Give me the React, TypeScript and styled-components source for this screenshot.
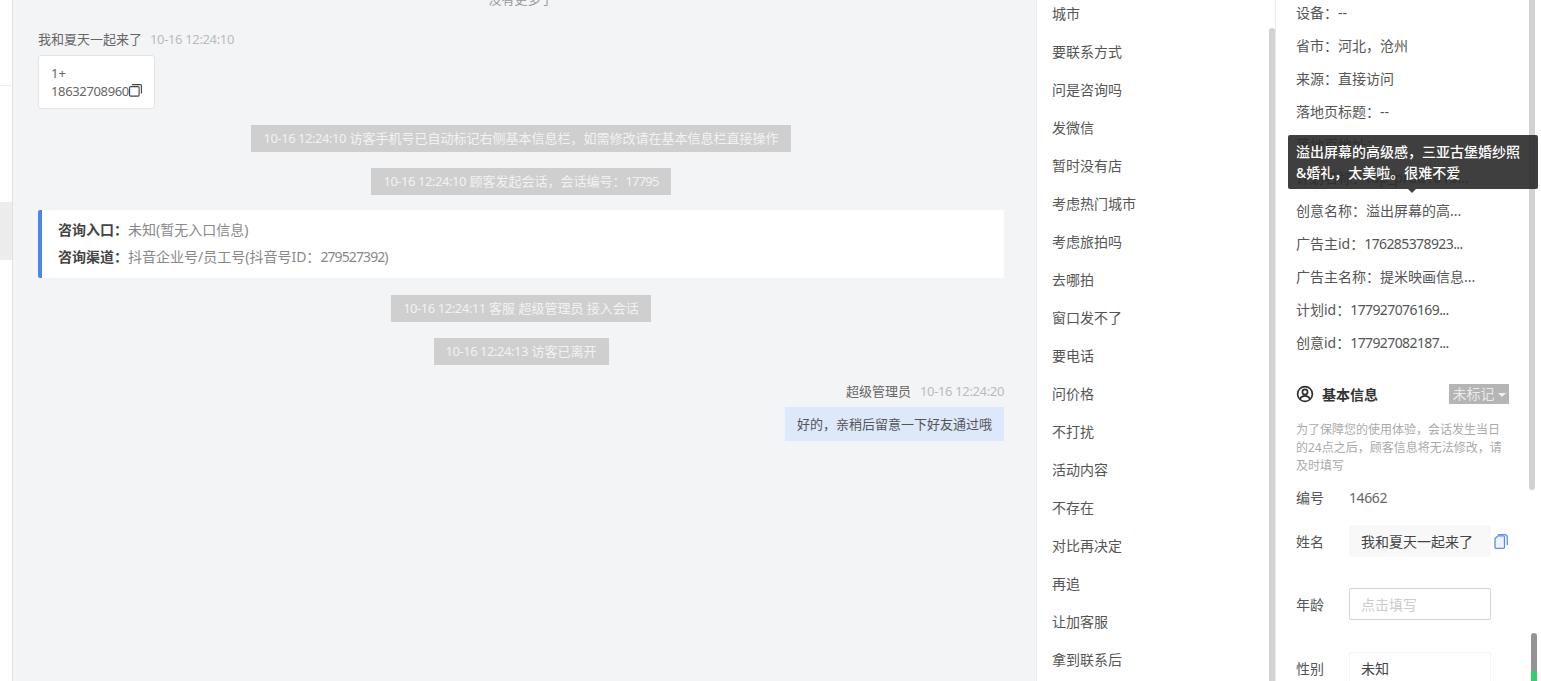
import * as React from "react";
import styled, { createGlobalStyle } from "styled-components";

const GlobalStyle = createGlobalStyle`
  html, body {
    margin: 0;
    padding: 0;
    height: 100%;
    overflow: hidden;
    background: #fff;
  }
  body {
    font-family: "Noto Sans", "Noto Sans CJK SC", sans-serif;
    font-size: 14px;
    color: #555;
  }
`;

const Page = styled.div`
  display: flex;
  position: relative;
  width: 1541px;
  height: 681px;
  overflow: hidden;
`;

const Rail = styled.div`
  width: 12px;
  flex: none;
  border-right: 1px solid #e2e2e2;
  background: #fff;
`;

const RailLine = styled.div`
  height: 1px;
  margin-top: 85px;
  background: #efefef;
`;

const RailActive = styled.div`
  height: 58px;
  margin-top: 116px;
  background: #ececec;
`;

const Main = styled.div`
  width: 1023px;
  flex: none;
  box-sizing: border-box;
  padding: 0 32px 0 25px;
  background: #f3f4f6;
  display: flex;
  flex-direction: column;
`;

const NoMore = styled.div`
  margin-top: -11px;
  height: 20px;
  line-height: 20px;
  font-size: 13px;
  color: #999;
  text-align: center;
`;

const MetaRow = styled.div<{ $right?: boolean; $top: number }>`
  display: flex;
  align-items: center;
  gap: ${(p) => (p.$right ? 9 : 8)}px;
  height: 20px;
  line-height: 20px;
  margin-top: ${(p) => p.$top}px;
  font-size: 13px;
  color: #666;
  justify-content: ${(p) => (p.$right ? "flex-end" : "flex-start")};
`;

const Time = styled.span`
  color: #bbb;
  letter-spacing: -0.35px;
`;

const Digits = styled.span<{ $tight: number }>`
  letter-spacing: ${(p) => p.$tight}px;
`;

const PhoneCard = styled.div`
  width: 117px;
  height: 54px;
  box-sizing: border-box;
  margin-top: 6px;
  padding: 8px 12px;
  background: #fff;
  border: 1px solid #e3e4e6;
  border-radius: 3px;
  font-size: 13px;
  line-height: 18px;
  color: #666;
`;

const PhoneLine = styled.div`
  display: flex;
  align-items: center;
  white-space: nowrap;
  svg {
    flex: none;
    margin-top: -2px;
  }
`;

const SystemNote = styled.div<{ $gap: number }>`
  align-self: center;
  height: 27px;
  line-height: 27px;
  padding: 0 12px;
  margin-top: ${(p) => p.$gap}px;
  background: #cfcfcf;
  color: #f2f2f2;
  font-size: 13px;
  white-space: nowrap;
`;

const EntryCard = styled.div`
  margin-top: 15px;
  height: 68px;
  box-sizing: border-box;
  padding: 6px 16px;
  background: #fff;
  border-left: 4px solid #4a86f0;
  border-radius: 2px;
  font-size: 14px;
  line-height: 27px;
  color: #888;
`;

const EntryLabel = styled.b`
  font-weight: 700;
  color: #444;
`;

const Bubble = styled.div`
  align-self: flex-end;
  margin-top: 6px;
  height: 34px;
  line-height: 34px;
  padding: 0 12px;
  background: #dde8fb;
  color: #555;
  font-size: 13px;
  white-space: nowrap;
`;

const PhrasePanel = styled.div`
  width: 240px;
  flex: none;
  box-sizing: border-box;
  display: flex;
  background: #fff;
  border-left: 1px solid #e8eaee;
  border-right: 1px solid #e8eaee;
`;

const PhraseList = styled.div`
  flex: 1;
  margin-top: -5px;
  padding-left: 15px;
`;

const PhraseItem = styled.div`
  height: 38px;
  line-height: 38px;
  font-size: 14px;
  color: #555;
`;

const PhraseThumb = styled.div`
  width: 6px;
  flex: none;
  margin-top: 28px;
  background: #d2d2d2;
  border-radius: 3px 3px 0 0;
`;

const InfoPanel = styled.div`
  width: 253px;
  flex: none;
  box-sizing: border-box;
  padding-left: 20px;
  background: #fff;
  color: #555;
`;

const InfoRows = styled.div`
  margin-top: -4px;
`;

const InfoRow = styled.div`
  height: 33px;
  line-height: 33px;
  white-space: nowrap;
`;

const SectionHead = styled.div`
  display: flex;
  align-items: center;
  margin-top: 23px;
  padding-right: 20px;
  height: 24px;
`;

const SectionTitle = styled.div`
  margin-left: 8px;
  font-weight: 700;
  color: #333;
  flex: 1;
`;

const MarkTag = styled.div`
  width: 60px;
  height: 20px;
  line-height: 20px;
  text-align: center;
  background: #b5b5b5;
  color: #eaeaea;
  white-space: nowrap;
`;

const Caret = styled.span`
  display: inline-block;
  margin-left: 3px;
  vertical-align: middle;
  border: 4px solid transparent;
  border-top: 4px solid #f0f0f0;
  border-bottom: 0;
`;

const Notice = styled.div`
  margin-top: 15px;
  width: 210px;
  font-size: 12px;
  line-height: 18px;
  color: #aaa;
`;

const FieldRow = styled.div<{ $top: number }>`
  display: flex;
  align-items: center;
  margin-top: ${(p) => p.$top}px;
  color: #555;
`;

const FieldLabel = styled.div`
  width: 53px;
  flex: none;
`;

const FieldValue = styled.div<{ $tone: "filled" | "input" | "faint" }>`
  width: 142px;
  height: 32px;
  line-height: 32px;
  box-sizing: border-box;
  padding-left: 11px;
  border-radius: 2px;
  white-space: nowrap;
  background: ${(p) => (p.$tone === "filled" ? "#f8f8f8" : "#fff")};
  border: 1px solid
    ${(p) =>
      p.$tone === "input"
        ? "#d4d4d4"
        : p.$tone === "faint"
          ? "#f3f3f3"
          : "#f8f8f8"};
  color: ${(p) => (p.$tone === "input" ? "#ccc" : "#444")};
`;

const PlainValue = styled.div`
  color: #666;
  letter-spacing: -0.4px;
`;

const CopyButton = styled.div`
  margin-left: 3px;
  display: flex;
`;

const InfoThumb = styled.div`
  width: 6px;
  height: 490px;
  flex: none;
  background: #d2d2d2;
  border-radius: 0 0 3px 3px;
`;

const PageThumb = styled.div`
  position: absolute;
  left: 1531px;
  top: 633px;
  bottom: 0;
  width: 6px;
  background: #949494;
  border-radius: 3px 3px 0 0;
  overflow: hidden;
`;

const PageThumbGreen = styled.div`
  position: absolute;
  left: 0;
  right: 0;
  bottom: 0;
  height: 10px;
  background: #35cf72;
`;

const Tooltip = styled.div`
  position: absolute;
  left: 1288px;
  top: 135px;
  width: 250px;
  height: 54px;
  box-sizing: border-box;
  padding: 6px 12px 6px 8px;
  border-radius: 2px;
  background: rgba(42, 42, 42, 0.9);
  color: #fff;
  font-size: 14px;
  font-weight: 500;
  line-height: 21px;
  &::after {
    content: "";
    position: absolute;
    left: 120px;
    top: 100%;
    border: 4px solid transparent;
    border-top-color: rgba(42, 42, 42, 0.9);
    border-bottom: 0;
  }
`;

// full-width punctuation
const COMMA = "\uFF0C";
const COLON = "\uFF1A";

const phrases = [
  "城市",
  "要联系方式",
  "问是咨询吗",
  "发微信",
  "暂时没有店",
  "考虑热门城市",
  "考虑旅拍吗",
  "去哪拍",
  "窗口发不了",
  "要电话",
  "问价格",
  "不打扰",
  "活动内容",
  "不存在",
  "对比再决定",
  "再追",
  "让加客服",
  "拿到联系后",
];

const infoRows: { label: string; value: string; digits?: boolean }[] = [
  { label: "设备", value: "--" },
  { label: "省市", value: `河北${COMMA}沧州` },
  { label: "来源", value: "直接访问" },
  { label: "落地页标题", value: "--" },
  { label: "落地页地址", value: "" },
  { label: "计划名称", value: "top_prod1010..." },
  { label: "创意名称", value: "溢出屏幕的高..." },
  { label: "广告主id", value: "176285378923...", digits: true },
  { label: "广告主名称", value: "提米映画信息..." },
  { label: "计划id", value: "177927076169...", digits: true },
  { label: "创意id", value: "177927082187...", digits: true },
];

const UserIcon = () => (
  <svg width="18" height="18" viewBox="0 0 18 18" fill="none" stroke="#2f2f2f" strokeWidth="1.7">
    <circle cx="9" cy="9" r="7.4" />
    <circle cx="9" cy="7" r="2.6" />
    <path d="M3.9 14c1-2.2 2.9-3.2 5.1-3.2s4.1 1 5.1 3.2" />
  </svg>
);

const CopyIcon = () => (
  <svg width="13" height="13" viewBox="0 0 13 13" fill="none" stroke="#444" strokeWidth="1.1">
    <rect x="0.6" y="2.6" width="9.5" height="9.5" rx="1" />
    <path d="M3 0.6h8.4a1 1 0 0 1 1 1v8" />
  </svg>
);

const PageCopyIcon = () => (
  <svg width="14" height="15" viewBox="0 0 14 15" fill="none" stroke="#5b8def" strokeWidth="1.3">
    <path d="M4 0.7h6.5c1.8 0 2.8 1 2.800 2.800v7.500" />
    <path
      d="M1 4.5 4 1.8h5.5a1 1 0 0 1 1 1v10.500a1 1 0 0 1-1 1H2a1 1 0 0 1-1-1z"
      fill="#eef3fd"
    />
  </svg>
);

const App = () => {
  return (
    <Page>
      <GlobalStyle />
      <Rail>
        <RailLine />
        <RailActive />
      </Rail>
      <Main>
        <NoMore>没有更多了</NoMore>
        <MetaRow $top={20}>
          我和夏天一起来了 <Time>10-16 12:24:10</Time>
        </MetaRow>
        <PhoneCard>
          1+
          <PhoneLine>
            <Digits $tight={-0.35}>18632708960</Digits>
            <CopyIcon />
          </PhoneLine>
        </PhoneCard>
        <SystemNote $gap={16}>
          <Digits $tight={-0.45}>10-16 12:24:10</Digits> {`访客手机号已自动标记右侧基本信息栏${COMMA}如需修改请在基本信息栏直接操作`}
        </SystemNote>
        <SystemNote $gap={16}>
          <Digits $tight={-0.45}>10-16 12:24:10</Digits> {`顾客发起会话${COMMA}会话编号${COLON}`}
          <Digits $tight={-0.8}>17795</Digits>
        </SystemNote>
        <EntryCard>
          <div>
            <EntryLabel>{`咨询入口${COLON}`}</EntryLabel>未知(暂无入口信息)
          </div>
          <div>
            <EntryLabel>{`咨询渠道${COLON}`}</EntryLabel>
            {`抖音企业号/员工号(抖音号ID${COLON}`}
            <Digits $tight={-0.9}>279527392)</Digits>
          </div>
        </EntryCard>
        <SystemNote $gap={17}>
          <Digits $tight={-0.45}>10-16 12:24:11</Digits> 客服 超级管理员 接入会话
        </SystemNote>
        <SystemNote $gap={16}>
          <Digits $tight={-0.45}>10-16 12:24:13</Digits> 访客已离开
        </SystemNote>
        <MetaRow $right $top={16}>
          超级管理员 <Time>10-16 12:24:20</Time>
        </MetaRow>
        <Bubble>{`好的${COMMA}亲稍后留意一下好友通过哦`}</Bubble>
      </Main>
      <PhrasePanel>
        <PhraseList>
          {phrases.map((text) => (
            <PhraseItem key={text}>{text}</PhraseItem>
          ))}
        </PhraseList>
        <PhraseThumb />
      </PhrasePanel>
      <InfoPanel>
        <InfoRows>
          {infoRows.map((row) => (
            <InfoRow key={row.label}>
              {row.label + COLON}
              <Digits $tight={row.digits ? -0.6 : 0}>{row.value}</Digits>
            </InfoRow>
          ))}
        </InfoRows>
        <SectionHead>
          <UserIcon />
          <SectionTitle>基本信息</SectionTitle>
          <MarkTag>
            未标记
            <Caret />
          </MarkTag>
        </SectionHead>
        <Notice>{`为了保障您的使用体验${COMMA}会话发生当日的24点之后${COMMA}顾客信息将无法修改${COMMA}请及时填写`}</Notice>
        <FieldRow $top={12}>
          <FieldLabel>编号</FieldLabel>
          <PlainValue>14662</PlainValue>
        </FieldRow>
        <FieldRow $top={18}>
          <FieldLabel>姓名</FieldLabel>
          <FieldValue $tone="filled">我和夏天一起来了</FieldValue>
          <CopyButton>
            <PageCopyIcon />
          </CopyButton>
        </FieldRow>
        <FieldRow $top={31}>
          <FieldLabel>年龄</FieldLabel>
          <FieldValue $tone="input">点击填写</FieldValue>
        </FieldRow>
        <FieldRow $top={32}>
          <FieldLabel>性别</FieldLabel>
          <FieldValue $tone="faint">未知</FieldValue>
        </FieldRow>
      </InfoPanel>
      <InfoThumb />
      <PageThumb>
        <PageThumbGreen />
      </PageThumb>
      <Tooltip>{`溢出屏幕的高级感${COMMA}三亚古堡婚纱照&婚礼${COMMA}太美啦。很难不爱`}</Tooltip>
    </Page>
  );
};

export default App;
